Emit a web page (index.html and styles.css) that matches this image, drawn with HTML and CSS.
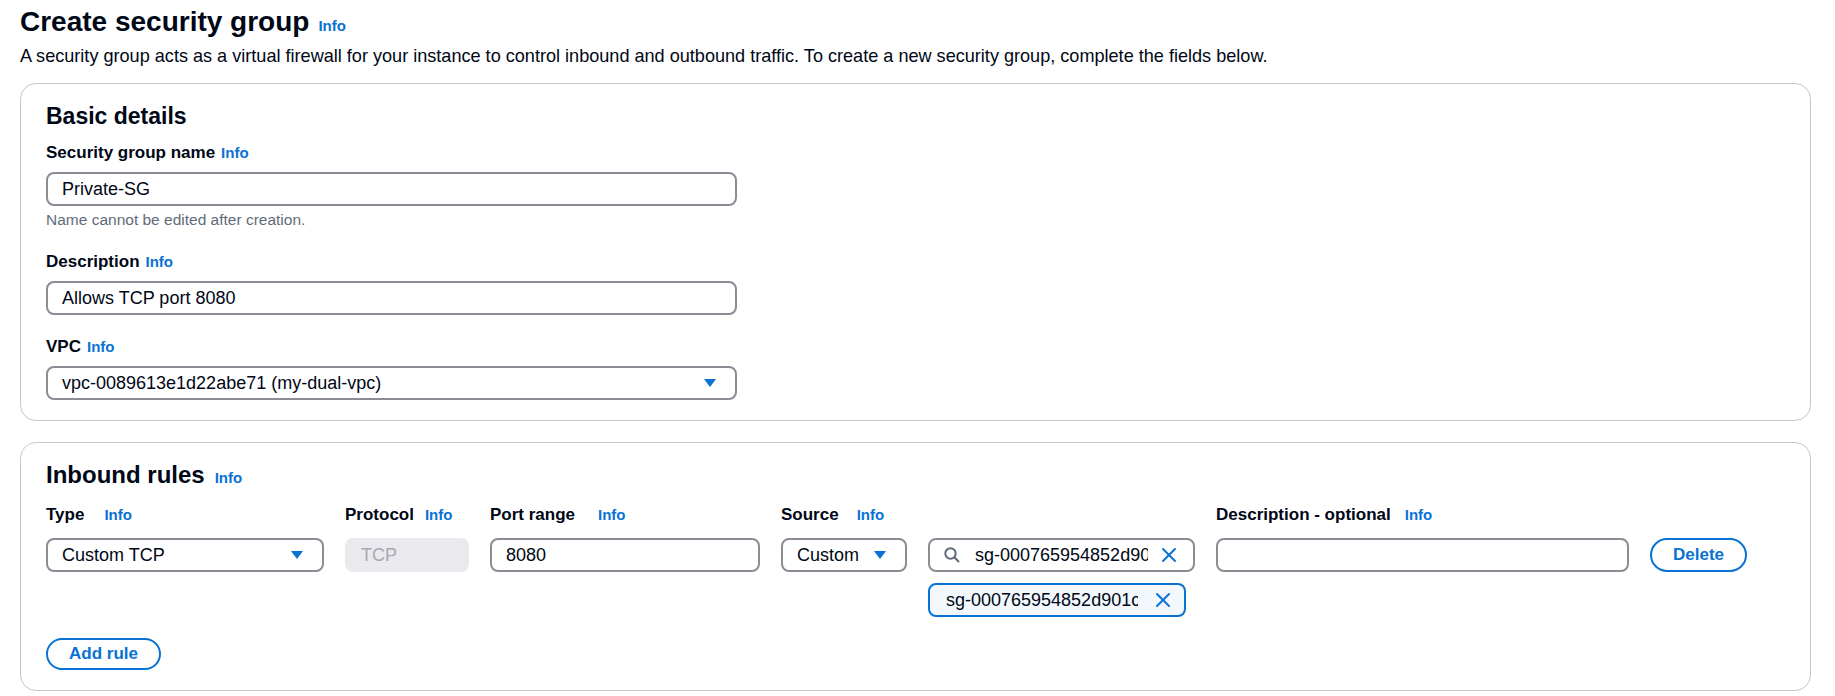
FILE: index.html
```html
<!DOCTYPE html>
<html lang="en">
<head>
<meta charset="utf-8">
<title>Create security group</title>
<link rel="stylesheet" href="styles.css">
</head>
<body>
<div class="page">
  <header class="page-header">
    <h1 class="title">Create security group<a class="info info--title">Info</a></h1>
    <p class="subtitle">A security group acts as a virtual firewall for your instance to control inbound and outbound traffic. To create a new security group, complete the fields below.</p>
  </header>

  <section class="card">
    <h2 class="card-title">Basic details</h2>
    <div class="fields">
      <div class="field">
        <div class="label">Security group name<a class="info">Info</a></div>
        <div class="input">Private-SG</div>
        <div class="hint">Name cannot be edited after creation.</div>
      </div>
      <div class="field">
        <div class="label">Description<a class="info">Info</a></div>
        <div class="input">Allows TCP port 8080</div>
      </div>
      <div class="field">
        <div class="label">VPC<a class="info">Info</a></div>
        <div class="input select">
          <span class="value">vpc-0089613e1d22abe71 (my-dual-vpc)</span>
          <svg class="caret" width="14" height="14" viewBox="0 0 14 14"><polygon points="1,3 13,3 7,11"/></svg>
        </div>
      </div>
    </div>
  </section>

  <section class="card">
    <h2 class="card-title card-title--wide">Inbound rules<a class="info info--title-wide">Info</a></h2>
    <div class="rules">
      <div class="label">Type<a class="info info--g20">Info</a></div>
      <div class="label">Protocol<a class="info info--g11">Info</a></div>
      <div class="label">Port range<a class="info info--g23">Info</a></div>
      <div class="label">Source<a class="info info--g18">Info</a></div>
      <div></div>
      <div class="label">Description - optional<a class="info info--g14">Info</a></div>
      <div></div>

      <div class="input select">
        <span class="value">Custom TCP</span>
        <svg class="caret" width="14" height="14" viewBox="0 0 14 14"><polygon points="1,3 13,3 7,11"/></svg>
      </div>
      <div class="input input--disabled">TCP</div>
      <div class="input">8080</div>
      <div class="input select">
        <span class="value">Custom</span>
        <svg class="caret" width="14" height="14" viewBox="0 0 14 14"><polygon points="1,3 13,3 7,11"/></svg>
      </div>
      <div class="source-stack">
        <div class="input search">
          <svg class="search-icon" width="16" height="16" viewBox="0 0 16 16"><circle cx="6.5" cy="6.5" r="5.2"/><line x1="10.3" y1="10.3" x2="15" y2="15"/></svg>
          <span class="clip">sg-000765954852d901c</span>
          <svg class="x-icon" width="16" height="16" viewBox="0 0 16 16"><line x1="2" y1="2" x2="14" y2="14"/><line x1="14" y1="2" x2="2" y2="14"/></svg>
        </div>
        <div class="token">
          <span class="clip clip--token">sg-000765954852d901c</span>
          <svg class="x-icon" width="16" height="16" viewBox="0 0 16 16"><line x1="2" y1="2" x2="14" y2="14"/><line x1="14" y1="2" x2="2" y2="14"/></svg>
        </div>
      </div>
      <div class="input"></div>
      <div><button class="btn">Delete</button></div>
    </div>
    <button class="btn btn--add">Add rule</button>
  </section>
</div>
</body>
</html>
```

FILE: styles.css
```css
* { box-sizing: border-box; }

html, body {
  margin: 0;
  background: #ffffff;
}

body {
  font-family: "Liberation Sans", Arial, sans-serif;
  color: #000716;
  font-size: 18px;
}

.page {
  padding: 5px 24px 0 20px;
}

.title {
  margin: 0;
  font-size: 28px;
  line-height: 34px;
  font-weight: 700;
}

.info {
  color: #0972d3;
  font-size: 15px;
  font-weight: 700;
  margin-left: 6px;
  cursor: pointer;
}

.info--title { margin-left: 9px; }
.info--title-wide { margin-left: 10px; }
.info--g11 { margin-left: 11px; }
.info--g14 { margin-left: 14px; }
.info--g18 { margin-left: 18px; }
.info--g20 { margin-left: 20px; }
.info--g23 { margin-left: 23px; }

.subtitle {
  margin: 1px 0 0;
  font-size: 18.1px;
  line-height: 24px;
}

.card {
  margin-top: 15px;
  border: 1px solid #c6c6cd;
  border-radius: 16px;
  padding: 18px 25px 20px;
}

.card + .card { margin-top: 21px; }

.card-title {
  margin: 0;
  font-size: 23px;
  line-height: 28px;
  font-weight: 700;
}

.card-title--wide { font-size: 24px; }

.fields {
  margin-top: 12px;
  width: 691px;
  display: flex;
  flex-direction: column;
  gap: 21px;
}

.field {
  display: flex;
  flex-direction: column;
}

.label {
  font-size: 17px;
  line-height: 22px;
  font-weight: 700;
  white-space: nowrap;
}

.field .label { margin-bottom: 8px; }

.input {
  height: 34px;
  border: 2px solid #8c8c94;
  border-radius: 8px;
  padding: 0 14px;
  display: flex;
  align-items: center;
  font-size: 18px;
  white-space: nowrap;
  background: #fff;
}

.hint {
  margin-top: 4px;
  font-size: 15.5px;
  line-height: 20px;
  color: #5f6b7a;
}

.select { justify-content: space-between; }

.select .value { overflow: hidden; }

.caret {
  flex: none;
  fill: #0972d3;
  margin-right: 4px;
}

.rules {
  margin-top: 12px;
  display: grid;
  grid-template-columns: 278px 124px 270px 126px 267px 413px auto;
  column-gap: 21px;
  row-gap: 12px;
  align-items: start;
}

.input--disabled {
  background: #e9e9ee;
  border-color: #e9e9ee;
  color: #a8a8b2;
}

.source-stack {
  display: flex;
  flex-direction: column;
  gap: 11px;
}

.search {
  padding: 0 16px 0 14px;
  gap: 15px;
}

.search-icon {
  flex: none;
  fill: none;
  stroke: #5f6b7a;
  stroke-width: 2;
}

.clip {
  flex: 1;
  min-width: 0;
  overflow: hidden;
  white-space: nowrap;
}

.clip--token {
  flex: none;
  width: 192px;
}

.x-icon {
  flex: none;
  stroke: #0972d3;
  stroke-width: 2;
  stroke-linecap: round;
}

.search .x-icon { margin-left: -2px; }

.token {
  width: 258px;
  height: 34px;
  border: 2px solid #0972d3;
  border-radius: 8px;
  background: #f2f8fd;
  padding: 0 13px 0 16px;
  display: flex;
  align-items: center;
  justify-content: space-between;
  font-size: 18px;
}

.btn {
  height: 34px;
  padding: 0 21px;
  border: 2px solid #0972d3;
  border-radius: 20px;
  background: #fff;
  color: #0972d3;
  font-family: "Liberation Sans", Arial, sans-serif;
  font-size: 17px;
  font-weight: 700;
  cursor: pointer;
}

.btn--add {
  display: block;
  margin-top: 21px;
  height: 32px;
  padding: 0 21px;
}
```
